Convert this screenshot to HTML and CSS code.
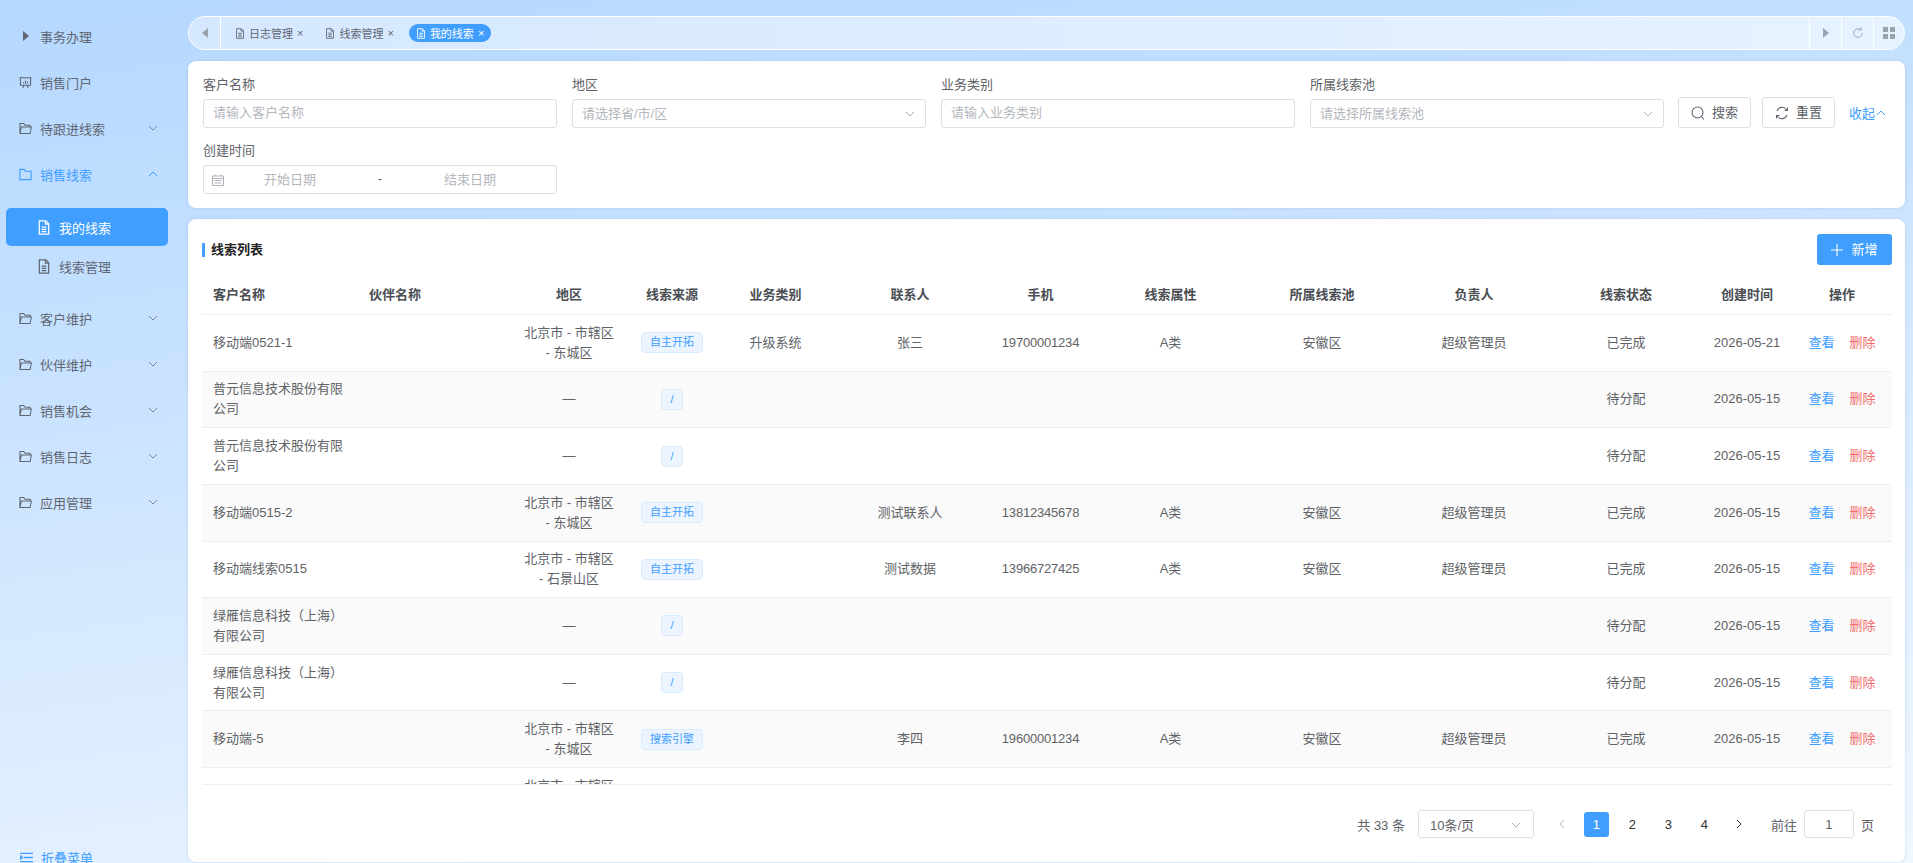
FILE: index.html
```html
<!DOCTYPE html>
<html lang="zh-CN">

<head>
    <meta charset="UTF-8">
    <title>我的线索</title>
    <link rel="stylesheet" href="styles.css">
</head>

<body>
    <svg class="sprites" xmlns="http://www.w3.org/2000/svg">
        <symbol id="doc" viewBox="0 0 14 16">
            <path d="M2 1h7l3 3v11H2zM8.500 1v3.500H12M4.500 7.500h5M4.500 10h5M4.500 12.500h5" fill="none" stroke="currentColor" stroke-width="1.300" />
        </symbol>
        <symbol id="folder-open" viewBox="0 0 14 14">
            <path d="M1 12.500V1.500h4l1.500 2H12v2M1 12.500l1.500-7H13.300l-1.300 7z" fill="none" stroke="currentColor" stroke-width="1.100" />
        </symbol>
        <symbol id="folder" viewBox="0 0 14 14">
            <path d="M1 12.500V1.500h4.500l1.500 2H13v9z" fill="none" stroke="currentColor" stroke-width="1.200" />
        </symbol>
        <symbol id="down" viewBox="0 0 12 12">
            <path d="M2 4l4 4 4-4" fill="none" stroke="currentColor" stroke-width="1" />
        </symbol>
        <symbol id="up" viewBox="0 0 12 12">
            <path d="M2 8l4-4 4 4" fill="none" stroke="currentColor" stroke-width="1" />
        </symbol>
    </svg>

    <aside class="sidebar">
        <a class="menu-item"><span class="caret"></span><span class="menu-text">事务办理</span></a>
        <a class="menu-item">
            <svg class="menu-icon" viewBox="0 0 14 14">
                <path d="M0.500 2h13M1.500 2v8h11V2M4 13l1.500-3M10 13l-1.500-3M5 8V6.500M7 8V5M9 8V6" fill="none" stroke="currentColor" stroke-width="1.100" />
            </svg>
            <span class="menu-text">销售门户</span>
        </a>
        <a class="menu-item">
            <svg class="menu-icon"><use href="#folder-open" /></svg>
            <span class="menu-text">待跟进线索</span>
            <svg class="menu-arrow"><use href="#down" /></svg>
        </a>
        <a class="menu-item open">
            <svg class="menu-icon"><use href="#folder" /></svg>
            <span class="menu-text">销售线索</span>
            <svg class="menu-arrow"><use href="#up" /></svg>
        </a>
        <div class="submenu">
            <a class="sub-item active"><svg class="sub-icon"><use href="#doc" /></svg>我的线索</a>
            <a class="sub-item"><svg class="sub-icon"><use href="#doc" /></svg>线索管理</a>
        </div>
        <a class="menu-item">
            <svg class="menu-icon"><use href="#folder-open" /></svg>
            <span class="menu-text">客户维护</span>
            <svg class="menu-arrow"><use href="#down" /></svg>
        </a>
        <a class="menu-item">
            <svg class="menu-icon"><use href="#folder-open" /></svg>
            <span class="menu-text">伙伴维护</span>
            <svg class="menu-arrow"><use href="#down" /></svg>
        </a>
        <a class="menu-item">
            <svg class="menu-icon"><use href="#folder-open" /></svg>
            <span class="menu-text">销售机会</span>
            <svg class="menu-arrow"><use href="#down" /></svg>
        </a>
        <a class="menu-item">
            <svg class="menu-icon"><use href="#folder-open" /></svg>
            <span class="menu-text">销售日志</span>
            <svg class="menu-arrow"><use href="#down" /></svg>
        </a>
        <a class="menu-item">
            <svg class="menu-icon"><use href="#folder-open" /></svg>
            <span class="menu-text">应用管理</span>
            <svg class="menu-arrow"><use href="#down" /></svg>
        </a>
        <a class="collapse-menu">
            <svg class="collapse-icon" viewBox="0 0 14 12">
                <path d="M0 1.500h14M4 6h10M0 10.500h14M0 4l2.500 2L0 8z" fill="none" stroke="currentColor" stroke-width="1.600" />
            </svg>
            折叠菜单
        </a>
    </aside>

    <main class="main">
        <nav class="tabbar">
            <button class="tab-btn first"><span class="tri-left"></span></button>
            <div class="tabs">
                <span class="tab"><svg class="tab-icon"><use href="#doc" /></svg>日志管理<i class="tab-close">×</i></span>
                <span class="tab"><svg class="tab-icon"><use href="#doc" /></svg>线索管理<i class="tab-close">×</i></span>
                <span class="tab current"><svg class="tab-icon"><use href="#doc" /></svg>我的线索<i class="tab-close">×</i></span>
            </div>
            <button class="tab-btn"><span class="tri-right"></span></button>
            <button class="tab-btn">
                <svg class="tool-icon" viewBox="0 0 14 14">
                    <path d="M12 7a5 5 0 1 1-2-4M10.500 0.500V3.500H7.500" fill="none" stroke="currentColor" stroke-width="1.100" />
                </svg>
            </button>
            <button class="tab-btn last">
                <svg class="tool-icon" viewBox="0 0 12 12">
                    <path d="M0 0h5v5H0zM7 0h5v5H7zM0 7h5v5H0zM7 7h5v5H7z" fill="currentColor" />
                </svg>
            </button>
        </nav>

        <section class="card filter">
            <div class="field">
                <label>客户名称</label>
                <input class="input" placeholder="请输入客户名称">
            </div>
            <div class="field">
                <label>地区</label>
                <div class="input select"><span>请选择省/市/区</span><svg class="select-arrow"><use href="#down" /></svg></div>
            </div>
            <div class="field">
                <label>业务类别</label>
                <input class="input" placeholder="请输入业务类别">
            </div>
            <div class="field">
                <label>所属线索池</label>
                <div class="input select"><span>请选择所属线索池</span><svg class="select-arrow"><use href="#down" /></svg></div>
            </div>
            <div class="filter-actions">
                <button class="btn">
                    <svg class="btn-icon" viewBox="0 0 14 14">
                        <circle cx="6.500" cy="6.500" r="5.500" fill="none" stroke="currentColor" stroke-width="1.100" />
                        <path d="M10.500 10.500l2.500 3" fill="none" stroke="currentColor" stroke-width="1.100" />
                    </svg>
                    搜索
                </button>
                <button class="btn">
                    <svg class="btn-icon" viewBox="0 0 14 14">
                        <path d="M2 5a5.300 5.300 0 0 1 9-2l1 1.500M12 9a5.300 5.300 0 0 1-9 2L2 9.500M12.500 1.500v3h-3M1.500 12.500v-3h3" fill="none" stroke="currentColor" stroke-width="1.100" />
                    </svg>
                    重置
                </button>
                <a class="fold-link">收起<svg class="fold-icon"><use href="#up" /></svg></a>
            </div>
            <div class="field">
                <label>创建时间</label>
                <div class="input date">
                    <svg class="date-icon" viewBox="0 0 12 12">
                        <path d="M0.500 2h11v9.500H0.500zM0.500 4.500h11M3 0.500V2M9 0.500V2M2.500 6.500h7M2.500 9h7" fill="none" stroke="currentColor" stroke-width="0.900" />
                    </svg>
                    <span class="date-start">开始日期</span>
                    <span class="date-sep">-</span>
                    <span class="date-end">结束日期</span>
                </div>
            </div>
        </section>

        <section class="card list">
            <div class="list-head">
                <h2 class="list-title">线索列表</h2>
                <button class="btn-add">
                    <svg class="add-icon" viewBox="0 0 12 12">
                        <path d="M6 0v12M0 6h12" fill="none" stroke="currentColor" stroke-width="1.100" />
                    </svg>
                    新增
                </button>
            </div>

            <div class="table-wrap">
                <table class="table">
                    <colgroup>
                        <col class="c1"><col class="c2"><col class="c3"><col class="c4"><col class="c5"><col class="c6"><col class="c7">
                        <col class="c8"><col class="c9"><col class="c10"><col class="c11"><col class="c12"><col class="c13">
                    </colgroup>
                    <thead>
                        <tr>
                            <th class="left">客户名称</th><th class="left">伙伴名称</th><th>地区</th><th>线索来源</th><th>业务类别</th><th>联系人</th><th>手机</th>
                            <th>线索属性</th><th>所属线索池</th><th>负责人</th><th>线索状态</th><th>创建时间</th><th class="ops">操作</th>
                        </tr>
                    </thead>
                    <tbody>
                        <tr>
                            <td class="left">移动端0521-1</td><td></td><td>北京市 - 市辖区 - 东城区</td><td><span class="tag">自主开拓</span></td><td>升级系统</td><td>张三</td><td class="phone">19700001234</td>
                            <td>A类</td><td>安徽区</td><td>超级管理员</td><td>已完成</td><td>2026-05-21</td><td class="ops"><a class="view">查看</a><a class="del">删除</a></td>
                        </tr>
                        <tr>
                            <td class="left">普元信息技术股份有限公司</td><td></td><td>—</td><td><span class="tag">/</span></td><td></td><td></td><td></td>
                            <td></td><td></td><td></td><td>待分配</td><td>2026-05-15</td><td class="ops"><a class="view">查看</a><a class="del">删除</a></td>
                        </tr>
                        <tr>
                            <td class="left">普元信息技术股份有限公司</td><td></td><td>—</td><td><span class="tag">/</span></td><td></td><td></td><td></td>
                            <td></td><td></td><td></td><td>待分配</td><td>2026-05-15</td><td class="ops"><a class="view">查看</a><a class="del">删除</a></td>
                        </tr>
                        <tr>
                            <td class="left">移动端0515-2</td><td></td><td>北京市 - 市辖区 - 东城区</td><td><span class="tag">自主开拓</span></td><td></td><td>测试联系人</td><td class="phone">13812345678</td>
                            <td>A类</td><td>安徽区</td><td>超级管理员</td><td>已完成</td><td>2026-05-15</td><td class="ops"><a class="view">查看</a><a class="del">删除</a></td>
                        </tr>
                        <tr>
                            <td class="left">移动端线索0515</td><td></td><td>北京市 - 市辖区 - 石景山区</td><td><span class="tag">自主开拓</span></td><td></td><td>测试数据</td><td class="phone">13966727425</td>
                            <td>A类</td><td>安徽区</td><td>超级管理员</td><td>已完成</td><td>2026-05-15</td><td class="ops"><a class="view">查看</a><a class="del">删除</a></td>
                        </tr>
                        <tr>
                            <td class="left">绿雁信息科技（上海）有限公司</td><td></td><td>—</td><td><span class="tag">/</span></td><td></td><td></td><td></td>
                            <td></td><td></td><td></td><td>待分配</td><td>2026-05-15</td><td class="ops"><a class="view">查看</a><a class="del">删除</a></td>
                        </tr>
                        <tr>
                            <td class="left">绿雁信息科技（上海）有限公司</td><td></td><td>—</td><td><span class="tag">/</span></td><td></td><td></td><td></td>
                            <td></td><td></td><td></td><td>待分配</td><td>2026-05-15</td><td class="ops"><a class="view">查看</a><a class="del">删除</a></td>
                        </tr>
                        <tr>
                            <td class="left">移动端-5</td><td></td><td>北京市 - 市辖区 - 东城区</td><td><span class="tag">搜索引擎</span></td><td></td><td>李四</td><td class="phone">19600001234</td>
                            <td>A类</td><td>安徽区</td><td>超级管理员</td><td>已完成</td><td>2026-05-15</td><td class="ops"><a class="view">查看</a><a class="del">删除</a></td>
                        </tr>
                        <tr>
                            <td class="left"></td><td></td><td>北京市 - 市辖区 - 东城区</td><td></td><td></td><td></td><td></td>
                            <td></td><td></td><td></td><td></td><td></td><td></td>
                        </tr>
                    </tbody>
                </table>
            </div>

            <div class="pager">
                <span class="pager-total">共 33 条</span>
                <div class="pager-size"><span>10条/页</span><svg class="select-arrow"><use href="#down" /></svg></div>
                <svg class="pager-arrow muted" viewBox="0 0 12 12"><path d="M8 2L4 6l4 4" fill="none" stroke="currentColor" /></svg>
                <span class="page current">1</span>
                <span class="page">2</span>
                <span class="page">3</span>
                <span class="page">4</span>
                <svg class="pager-arrow next" viewBox="0 0 12 12"><path d="M4 2l4 4-4 4" fill="none" stroke="currentColor" /></svg>
                <span class="pager-goto">前往</span>
                <input class="pager-input" value="1">
                <span>页</span>
            </div>
        </section>
    </main>
</body>

</html>
```

FILE: styles.css
```css
* {
    margin: 0;
    padding: 0;
    box-sizing: border-box;
}

body {
    font-family: 'Liberation Sans', 'Noto Sans CJK SC', sans-serif;
    font-size: 13px;
    color: #606266;
    background: linear-gradient(172deg, #b5d8ff 0%, #c8e2ff 35%, #dcecff 65%, #eff7ff 100%);
    display: flex;
    height: 100vh;
    overflow: hidden;
}

.sprites {
    display: none;
}

/* sidebar */
.sidebar {
    width: 188px;
    flex-shrink: 0;
    height: 100%;
    padding-top: 13px;
    display: flex;
    flex-direction: column;
    position: relative;
}

.menu-item {
    height: 46px;
    display: flex;
    align-items: center;
    padding-left: 19px;
    padding-right: 29px;
    color: #5f6672;
    flex-shrink: 0;
}

.menu-item.open {
    color: #409eff;
}

.menu-icon {
    width: 13px;
    height: 13px;
    margin-right: 8px;
    flex-shrink: 0;
}

.caret {
    width: 0;
    height: 0;
    margin: 0 11px 0 4px;
    border-left: 6px solid #5f6672;
    border-top: 5px solid transparent;
    border-bottom: 5px solid transparent;
}

.menu-text {
    flex: 1;
}

.menu-arrow {
    width: 12px;
    height: 12px;
    color: #7d8794;
}

.open .menu-arrow {
    color: #409eff;
}

.submenu {
    padding: 11px 20px 10px 6px;
    display: flex;
    flex-direction: column;
    gap: 1px;
}

.sub-item {
    height: 38px;
    display: flex;
    align-items: center;
    padding-left: 31px;
    border-radius: 5px;
    color: #5f6672;
}

.sub-item.active {
    background: #409eff;
    color: #fff;
}

.sub-icon {
    width: 14px;
    height: 15px;
    margin-right: 8px;
}

.collapse-menu {
    position: absolute;
    left: 20px;
    top: 848px;
    display: flex;
    align-items: center;
    gap: 8px;
    color: #409eff;
}

.collapse-icon {
    width: 13px;
    height: 11px;
}

/* main column */
.main {
    flex: 1;
    min-width: 0;
    height: 100%;
    padding: 16px 8px 1px 0;
    display: flex;
    flex-direction: column;
    gap: 11px;
}

.tabbar {
    height: 34px;
    flex-shrink: 0;
    display: flex;
    align-items: center;
    border: 1px solid #fff;
    border-radius: 17px;
    background: linear-gradient(90deg, #d5e8ff, #e6f2ff);
    font-size: 11px;
}

.tab-btn {
    width: 32px;
    height: 32px;
    display: flex;
    align-items: center;
    justify-content: center;
    border: 0;
    border-left: 1px solid #fff;
    background: none;
    color: #9aa3ae;
    flex-shrink: 0;
}

.tab-btn.first {
    border-left: 0;
    border-right: 1px solid #fff;
}

.tab-btn.last {
    width: 31px;
}

.tri-left {
    border-right: 6px solid #9aa3ae;
    border-top: 5px solid transparent;
    border-bottom: 5px solid transparent;
}

.tri-right {
    border-left: 6px solid #9aa3ae;
    border-top: 5px solid transparent;
    border-bottom: 5px solid transparent;
}

.tool-icon {
    width: 12px;
    height: 12px;
}

.tabs {
    flex: 1;
    display: flex;
    align-items: center;
    gap: 8px;
    padding-left: 7px;
}

.tab {
    height: 18px;
    display: flex;
    align-items: center;
    padding: 0 7px;
    border-radius: 9px;
    color: #5f6672;
    white-space: nowrap;
}

.tab.current {
    background: #409eff;
    color: #fff;
}

.tab-icon {
    width: 10px;
    height: 11px;
    margin-right: 4px;
}

.tab-close {
    font-style: normal;
    margin-left: 4px;
    font-size: 11px;
}

.card {
    background: #fff;
    border-radius: 8px;
    box-shadow: 0 0 3px rgba(120, 150, 190, 0.3);
}

/* filter */
.filter {
    flex-shrink: 0;
    padding: 15px 15px 14px;
    display: grid;
    grid-template-columns: repeat(4, 354px) auto;
    column-gap: 15px;
    row-gap: 14px;
}

.field label {
    display: block;
    height: 18px;
    line-height: 18px;
    margin-bottom: 5px;
}

.input {
    width: 100%;
    height: 29px;
    border: 1px solid #dcdfe6;
    border-radius: 3px;
    padding: 0 9px 2px;
    font: inherit;
    font-size: 13px;
    color: #606266;
    background: #fff;
    outline: none;
}

.input::placeholder {
    color: #b4b7bd;
}

.select {
    display: flex;
    align-items: center;
    justify-content: space-between;
    color: #b4b7bd;
}

.select-arrow {
    width: 12px;
    height: 12px;
    margin-top: 2px;
    color: #a8abb2;
}

.date {
    display: flex;
    align-items: center;
    color: #b4b7bd;
    padding-left: 8px;
}

.date-icon {
    width: 12px;
    height: 12px;
    margin-top: 2px;
    color: #a8abb2;
    flex-shrink: 0;
}

.date-start,
.date-end {
    width: 132px;
    text-align: center;
}

.date-sep {
    width: 48px;
    text-align: center;
    color: #606266;
}

.filter-actions {
    padding-top: 21px;
    margin-left: -1px;
    display: flex;
    align-items: flex-start;
    gap: 11px;
    white-space: nowrap;
}

.btn {
    width: 73px;
    height: 31px;
    display: flex;
    align-items: center;
    justify-content: center;
    gap: 7px;
    padding-bottom: 2px;
    border: 1px solid #dcdfe6;
    border-radius: 3px;
    background: #fff;
    font: inherit;
    color: #606266;
}

.btn-icon {
    width: 14px;
    height: 14px;
    margin-top: 2px;
    color: #5f6672;
}

.fold-link {
    margin-left: 3px;
    height: 31px;
    display: flex;
    align-items: center;
    color: #409eff;
}

.fold-icon {
    width: 12px;
    height: 12px;
}

/* list */
.list {
    flex: 1;
    min-height: 0;
    padding: 15px 13px 0 14px;
    display: flex;
    flex-direction: column;
}

.list-head {
    height: 31px;
    flex-shrink: 0;
    display: flex;
    align-items: center;
    justify-content: space-between;
    margin-bottom: 12px;
}

.list-title {
    font-size: 13px;
    font-weight: 700;
    color: #222;
    border-left: 3px solid #409eff;
    padding-left: 6px;
    line-height: 14px;
}

.btn-add {
    width: 75px;
    height: 31px;
    display: flex;
    align-items: center;
    justify-content: center;
    gap: 8px;
    padding-bottom: 2px;
    border: 0;
    border-radius: 3px;
    background: #409eff;
    color: #fff;
    font: inherit;
}

.add-icon {
    width: 12px;
    height: 12px;
    margin-top: 2px;
}

.table-wrap {
    height: 508px;
    flex-shrink: 0;
    overflow: hidden;
    border-bottom: 1px solid #ebeef5;
}

.table {
    width: 1690px;
    table-layout: fixed;
    border-collapse: separate;
    border-spacing: 0;
}

.c1 { width: 156px; }
.c2 { width: 164px; }
.c3 { width: 94px; }
.c4 { width: 112px; }
.c5 { width: 95px; }
.c6 { width: 174px; }
.c7 { width: 87px; }
.c8 { width: 173px; }
.c9 { width: 130px; }
.c10 { width: 174px; }
.c11 { width: 130px; }
.c12 { width: 112px; }
.c13 { width: 89px; }

.table th,
.table td {
    text-align: center;
    border-bottom: 1px solid #ebeef5;
    line-height: 20px;
}

.table th {
    height: 38px;
    font-weight: 700;
    color: #4a4d52;
    padding-bottom: 1px;
    white-space: nowrap;
}

.table td {
    height: 56.625px;
    color: #606266;
}

.table .left {
    text-align: left;
    padding-left: 11px;
    padding-right: 11px;
}

.table .ops {
    padding-right: 11px;
    white-space: nowrap;
}

.table .phone {
    letter-spacing: -0.2px;
    white-space: nowrap;
}

.table tbody tr:nth-child(even) td {
    background: #fafafa;
}

.tag {
    display: inline-block;
    min-width: 20px;
    height: 21px;
    line-height: 19px;
    padding: 0 8px;
    font-size: 11px;
    color: #409eff;
    background: #ecf5ff;
    border: 1px solid #d9ecff;
    border-radius: 4px;
    white-space: nowrap;
}

.view {
    color: #409eff;
}

.del {
    color: #f56c6c;
    margin-left: 15px;
}

/* pagination */
.pager {
    flex-shrink: 0;
    margin-top: 25px;
    padding-right: 18px;
    height: 28px;
    display: flex;
    align-items: center;
    justify-content: flex-end;
}

.pager-total {
    margin-right: 13px;
}

.pager-size {
    width: 116px;
    height: 28px;
    padding: 0 11px;
    margin-right: 22px;
    display: flex;
    align-items: center;
    justify-content: space-between;
    border: 1px solid #dcdfe6;
    border-radius: 3px;
}

.pager-arrow {
    width: 12px;
    height: 12px;
    margin-right: 10.500px;
    color: #b4b7bd;
}

.pager-arrow.next {
    margin: 0 6px 0 10.500px;
    color: #303133;
}

.page {
    width: 25px;
    height: 25px;
    line-height: 25px;
    margin: 0 5.500px;
    text-align: center;
    color: #303133;
    border-radius: 3px;
}

.page.current {
    background: #409eff;
    color: #fff;
}

.pager-goto {
    margin-left: 20px;
    margin-right: 7px;
}

.pager-input {
    width: 50px;
    height: 28px;
    margin-right: 7px;
    border: 1px solid #dcdfe6;
    border-radius: 3px;
    text-align: center;
    font: inherit;
    color: #606266;
    outline: none;
}
```
